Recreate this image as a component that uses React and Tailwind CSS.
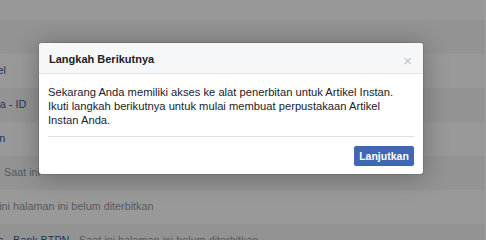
import React from "react";

const rows = [
  { bg: "bg-[#939394]", content: null },
  {
    bg: "bg-[#999999]",
    content: <span className="text-[#20355c] -ml-[24px]">Artikel</span>,
  },
  {
    bg: "bg-[#939394]",
    content: (
      <span className="text-[#20355c] -ml-[41px]">Indonesia - ID</span>
    ),
  },
  {
    bg: "bg-[#999999]",
    content: <span className="text-[#20355c] -ml-[38px]">Halaman</span>,
  },
  {
    bg: "bg-[#939394]",
    content: <span className="text-[#56595e] ml-[4px]">Saat ini</span>,
  },
  {
    bg: "bg-[#999999]",
    content: (
      <span className="text-[#56595e] -ml-[26px]">
        Saat ini halaman ini belum diterbitkan
      </span>
    ),
  },
  {
    bg: "bg-[#939394]",
    content: (
      <span className="-ml-[2px]">
        <span className="text-[#20355c]">c</span>
        <span className="text-[#56595e]"> - </span>
        <span className="text-[#20355c]">Bank BTPN</span>
        <span className="text-[#56595e]"> - Saat ini halaman ini belum diterbitkan</span>
      </span>
    ),
  },
];

export default function App() {
  return (
    <div
      className="relative w-[486px] h-[240px] overflow-hidden bg-[#989898] flex"
      style={{ fontFamily: '"Liberation Sans", Arial, sans-serif' }}
    >
      <div className="flex-1 flex flex-col">
        <div className="h-[20px] shrink-0 bg-[#989898]" />
        {rows.map((r, i) => (
          <div
            key={i}
            className={`h-[34px] shrink-0 ${r.bg} flex items-center pb-[1px] whitespace-nowrap text-[10.8px] overflow-hidden`}
          >
            {r.content}
          </div>
        ))}
      </div>
      <div className="w-[1px] bg-[#9d9d9d]" />

      <div className="absolute left-[39px] top-[43px] w-[384px] bg-white rounded-[3px] shadow-[0_2px_26px_rgba(0,0,0,0.3),0_0_0_1px_rgba(0,0,0,0.1)] overflow-hidden">
        <div className="h-[31px] bg-[#f6f7f9] border-b border-[#e5e5e5] flex items-center justify-between pl-[10px] pr-[11px] pt-[2px]">
          <span className="text-[11px] font-bold text-[#1d2129]">
            Langkah Berikutnya
          </span>
          <span className="text-[#bec2c9] text-[15px] leading-none pt-[2px]">×</span>
        </div>
        <div className="px-[9px] pt-[11px]">
          <p className="text-[11.2px] leading-[14px] text-[#1d2129] whitespace-nowrap">
            Sekarang Anda memiliki akses ke alat penerbitan untuk Artikel Instan.
            <br />
            Ikuti langkah berikutnya untuk mulai membuat perpustakaan Artikel
            <br />
            Instan Anda.
          </p>
          <div className="mt-[9px] border-t border-[#dddfe2]" />
          <div className="flex justify-end pt-[9px] pb-[8px]">
            <button className="h-[20px] w-[60px] bg-[#4267b2] border border-[#4267b2] rounded-[2px] text-white text-[10.5px] font-bold leading-none">
              Lanjutkan
            </button>
          </div>
        </div>
      </div>
    </div>
  );
}
